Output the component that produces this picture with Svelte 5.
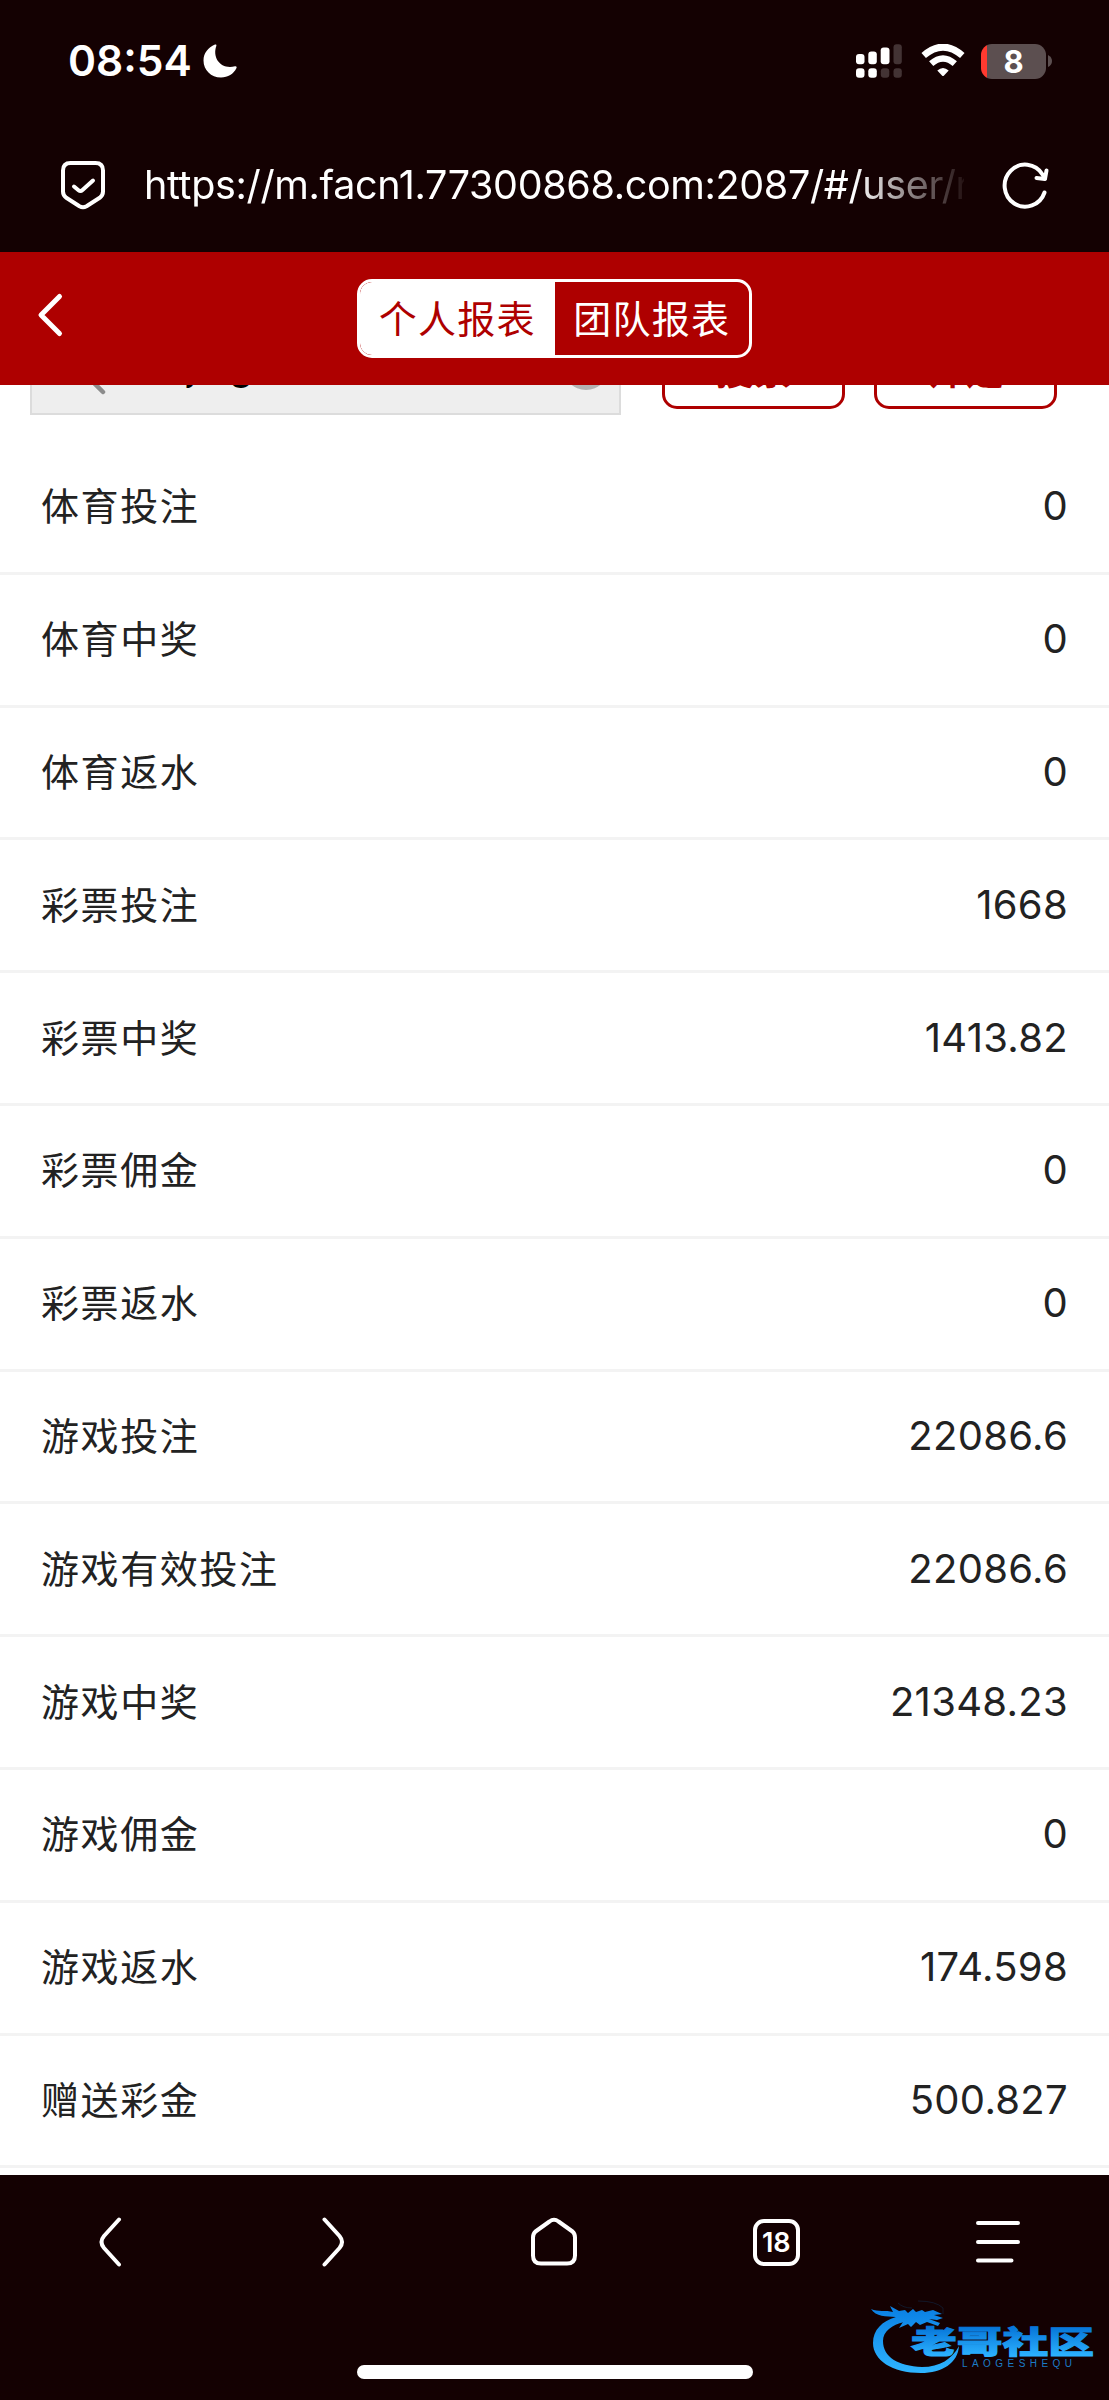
<script>
    const tabs = ['个人报表', '团队报表'];
    let active = 0;
    let account = 'jing';

    const rows = [
        { label: '体育投注', value: '0' },
        { label: '体育中奖', value: '0' },
        { label: '体育返水', value: '0' },
        { label: '彩票投注', value: '1668' },
        { label: '彩票中奖', value: '1413.82' },
        { label: '彩票佣金', value: '0' },
        { label: '彩票返水', value: '0' },
        { label: '游戏投注', value: '22086.6' },
        { label: '游戏有效投注', value: '22086.6' },
        { label: '游戏中奖', value: '21348.23' },
        { label: '游戏佣金', value: '0' },
        { label: '游戏返水', value: '174.598' },
        { label: '赠送彩金', value: '500.827' }
    ];
</script>

<div class="phone">
    <div class="status">
        <span class="time">08:54</span>
        <svg class="moon" width="36" height="36" viewBox="0 0 36 36">
            <path d="M13 1.600C14 1 14.800 1.800 14.300 3C10 15 19 27 33 23.300C34.300 23 35 23.800 34.500 25C31.500 31 26 34.500 19 34.500C9 34.500 1.500 27 1.500 17.500C1.500 10.500 6 4.500 13 1.600Z" fill="#fff" />
        </svg>
        <div class="indicators">
            <svg width="46" height="34" viewBox="0 0 46 34" fill="#fff">
                <rect x="0" y="10" width="8.500" height="10.300" rx="3" />
                <rect x="12.300" y="7.500" width="8.500" height="12.800" rx="3" />
                <rect x="24.700" y="3.500" width="8.800" height="16.800" rx="3" />
                <rect x="37.500" y="0.200" width="8.300" height="20.100" rx="3" opacity="0.2" />
                <rect x="0" y="24.200" width="8.500" height="9.500" rx="3" />
                <rect x="12.300" y="24.200" width="8.500" height="9.500" rx="3" />
                <rect x="24.800" y="24.200" width="8.500" height="9.500" rx="3" opacity="0.2" />
                <rect x="37.500" y="24.200" width="8.300" height="9.500" rx="3" opacity="0.2" />
            </svg>
            <svg class="wifi" width="44" height="34" viewBox="0 0 44 34">
                <path d="M2.700 11.500Q22 -5.300 41.300 11.500" fill="none" stroke="#fff" stroke-width="6.800" />
                <path d="M10.200 19.700Q22 9.300 33.800 19.700" fill="none" stroke="#fff" stroke-width="6.400" />
                <path d="M16.300 26.500Q22 21.500 27.700 26.500L22.800 31.700Q22 32.400 21.200 31.700Z" fill="#fff" />
            </svg>
            <div class="battery"><span>8</span></div>
            <svg class="nub" width="4" height="12" viewBox="0 0 4 12">
                <path d="M0 0Q4 2 4 6T0 12Z" fill="#5c4f50" />
            </svg>
        </div>
    </div>

    <div class="address">
        <svg width="46" height="50" viewBox="0 0 46 50" fill="none" stroke="#fff" stroke-width="4" stroke-linecap="round" stroke-linejoin="round">
            <path d="M10.500 3H35.500Q43 3 43 10.500V31.500Q43 35.500 39.700 37.800L26.500 46.300Q23 48.200 19.500 46.300L6.300 37.800Q3 35.500 3 31.500V10.500Q3 3 10.500 3Z" />
            <path d="M14 26.500L18.500 30.200Q20.500 31.800 22.500 30L33 20.500" />
        </svg>
        <div class="url">https://m.facn1.77300868.com:2087/#/user/r</div>
        <svg width="48" height="48" viewBox="0 0 48 48" fill="none" stroke="#fff" stroke-width="4" stroke-linecap="round" stroke-linejoin="round">
            <path d="M43.500 31.500A20.500 21 0 1 1 41.500 13.500L43.800 17.500" />
            <path d="M45.500 9.500L44 18L35.500 17" />
        </svg>
    </div>

    <header>
        <svg class="back" width="28" height="46" viewBox="0 0 28 46" fill="none" stroke="#fff" stroke-width="5" stroke-linecap="round" stroke-linejoin="round">
            <path d="M23.500 4.500L5 23L23.500 41.500" />
        </svg>
        <div class="tabs">
            {#each tabs as tab, i}
                <button class:active={active === i} on:click={() => (active = i)}>{tab}</button>
            {/each}
        </div>
    </header>

    <main>
        <div class="search">
            <div class="field">
                <svg width="54" height="52" viewBox="0 0 54 52" fill="none" stroke="#8c8c8c" stroke-width="4.500" stroke-linecap="round">
                    <circle cx="23" cy="14" r="15" />
                    <path d="M33 26L51 44" />
                </svg>
                <span class="account">{account}</span>
                <span class="clear"></span>
            </div>
            <button>搜索</button>
            <button>筛选</button>
        </div>

        <ul>
            {#each rows as row}
                <li>
                    <span class="label">{row.label}</span>
                    <span class="value">{row.value}</span>
                </li>
            {/each}
        </ul>
    </main>

    <footer>
        <nav>
            <div>
                <svg width="50" height="50" viewBox="0 0 50 50"><path d="M33 2.500L18 19Q13 25 18 31L33 47.500" /></svg>
            </div>
            <div>
                <svg width="50" height="50" viewBox="0 0 50 50"><path d="M16.500 2.500L31.500 19Q36.500 25 31.500 31L16.500 47.500" /></svg>
            </div>
            <div>
                <svg width="50" height="50" viewBox="0 0 50 50"><path d="M20.500 4.500Q25 1 29.500 4.500L43.500 14.500Q46 16.800 46 20.500V38.500Q46 46.500 38 46.500H12Q4 46.500 4 38.500V20.500Q4 16.800 6.500 14.500Z" /></svg>
            </div>
            <div><span class="count">18</span></div>
            <div>
                <svg width="50" height="50" viewBox="0 0 50 50"><path d="M5 6H45M5 25H45M5 43.500H38.500" /></svg>
            </div>
        </nav>
        <div class="home-bar"></div>
    </footer>

    <svg class="logo" width="230" height="90" viewBox="0 0 230 90">
        <defs>
            <linearGradient id="ring" gradientUnits="userSpaceOnUse" x1="0" y1="8" x2="0" y2="72">
                <stop offset="0" stop-color="#0a80e4" />
                <stop offset="1" stop-color="#2eb4ff" />
            </linearGradient>
            <linearGradient id="word" gradientUnits="userSpaceOnUse" x1="0" y1="27" x2="0" y2="56">
                <stop offset="0" stop-color="#0675d8" />
                <stop offset="1" stop-color="#2cb2ff" />
            </linearGradient>
        </defs>
        <g fill="url(#ring)">
            <path d="M26 17C12 21 3 30 3 43C3 60 22 73 51 73C72 73 88 63 89 46C82 59 70 67 52 67C28 66 13 57 13 41C13 31 22 25 34 22Z" />
            <path d="M1 9C8 12 16 10 23 12L20 6L29 11L35 10L38 13L43 9L46 12L52 10L55 12L63 10L72 14L64 15L73 18L67 20L59 19L70 23L68 26L57 22L50 25L46 22L41 27L38 24L29 28L33 22L24 23L26 17C16 16 6 17 1 9Z" />
        </g>
        <path d="M28 3Q33 8 42 8M48 1Q66 1 73 8V14" fill="none" stroke="#0d4c80" stroke-width="1" opacity="0.3" />
        <text class="word" x="41" y="53" textLength="183" lengthAdjust="spacingAndGlyphs">老哥社区</text>
        <text class="latin" x="92" y="67" textLength="110">LAOGESHEQU</text>
    </svg>
</div>

<style>
    :global(body) {
        margin: 0;
        background: #140102;
    }

    .phone {
        position: relative;
        display: flex;
        flex-direction: column;
        width: 1109px;
        height: 2400px;
        overflow: hidden;
        background: #140102;
        color: #fff;
        font-family: Inter, "Noto Sans CJK SC", sans-serif;
    }

    button {
        padding: 0;
        border: 0;
        background: none;
        font-family: inherit;
        cursor: pointer;
    }

    svg {
        display: block;
        flex: none;
    }

    /* status bar */
    .status {
        display: flex;
        align-items: center;
        flex: none;
        box-sizing: border-box;
        height: 122px;
        padding: 0 57px 0 68px;
    }

    .time {
        width: 134px;
        font-size: 42.500px;
        font-weight: 600;
        line-height: 52px;
        white-space: nowrap;
    }

    .moon {
        margin-top: -1px;
    }

    .indicators {
        display: flex;
        align-items: center;
        margin-left: auto;
    }

    .wifi {
        margin: 0 16px 0 19px;
    }

    .battery {
        width: 65px;
        height: 35px;
        border-radius: 11px;
        background: linear-gradient(90deg, #ff3a30 6px, #5c4f50 6px);
        font-size: 31px;
        font-weight: 700;
        line-height: 35px;
        text-align: center;
    }

    .nub {
        margin-left: 2px;
    }

    /* address bar */
    .address {
        display: flex;
        align-items: center;
        flex: none;
        box-sizing: border-box;
        height: 130px;
        padding: 0 60px 4px;
    }

    .url {
        width: 820px;
        margin: 0 37px 0 38px;
        font-size: 39.500px;
        letter-spacing: -0.350px;
        line-height: 56px;
        white-space: nowrap;
        -webkit-mask-image: linear-gradient(90deg, #000 710px, transparent 828px);
        mask-image: linear-gradient(90deg, #000 710px, transparent 828px);
    }

    /* report header */
    header {
        display: grid;
        grid-template-columns: 1fr auto 1fr;
        align-items: center;
        flex: none;
        height: 133px;
        background: #ae0000;
    }

    .back {
        margin: -8px 0 0 36px;
    }

    .tabs {
        display: flex;
        box-sizing: border-box;
        width: 395px;
        height: 79px;
        border: 3px solid #fff;
        border-radius: 15px;
        overflow: hidden;
    }

    .tabs button {
        flex: 1;
        padding-bottom: 4px;
        color: #fff;
        font-size: 38px;
        letter-spacing: 1.300px;
    }

    .tabs .active {
        background: #fff;
        border-radius: 12px 0 0 12px;
        color: #ae0000;
    }

    /* scrolled list */
    main {
        flex: 1;
        min-height: 0;
        overflow: hidden;
        background: #fff;
        color: #222;
    }

    .search {
        display: flex;
        align-items: center;
        margin: -53px 51px 27px 30px;
    }

    .field {
        display: flex;
        align-items: center;
        box-sizing: border-box;
        width: 591px;
        height: 83px;
        margin-right: 41px;
        padding: 0 10px 0 20px;
        border: 2px solid #dcdcdc;
        background: #eee;
        color: #000;
        font-size: 39px;
    }

    .account {
        margin: -16px 0 0 81px;
        line-height: 48px;
    }

    .clear {
        width: 46px;
        height: 46px;
        margin: -14px 0 0 auto;
        border-radius: 50%;
        background: #b3b3b3;
    }

    .search button {
        box-sizing: border-box;
        width: 183px;
        height: 75px;
        margin-top: -4px;
        padding-bottom: 9px;
        border: 3px solid #ae0000;
        border-radius: 15px;
        color: #ae0000;
        font-size: 38px;
        font-weight: 700;
    }

    .search button + button {
        margin-left: 29px;
    }

    ul {
        margin: 0;
        padding: 0;
        list-style: none;
    }

    li {
        display: flex;
        align-items: center;
        justify-content: space-between;
        box-sizing: border-box;
        height: 132.800px;
        padding: 0 41px;
        border-bottom: 3px solid #f3f3f3;
    }

    .label {
        padding-bottom: 6px;
        font-size: 38px;
        letter-spacing: 1.600px;
    }

    .value {
        padding-bottom: 2px;
        font-size: 40px;
        letter-spacing: 0.300px;
    }

    /* browser toolbar */
    footer {
        display: flex;
        flex-direction: column;
        align-items: center;
        justify-content: space-between;
        flex: none;
        box-sizing: border-box;
        height: 225px;
        padding: 42px 0 21px;
    }

    nav {
        display: grid;
        grid-template-columns: repeat(5, 1fr);
        justify-items: center;
        align-items: center;
        width: 100%;
    }

    nav svg {
        fill: none;
        stroke: #fff;
        stroke-width: 4;
        stroke-linecap: round;
        stroke-linejoin: round;
    }

    .count {
        display: block;
        box-sizing: border-box;
        width: 47px;
        height: 47px;
        border: 4px solid #fff;
        border-radius: 11px;
        font-size: 27px;
        font-weight: 600;
        line-height: 39px;
        text-align: center;
    }

    .home-bar {
        width: 396px;
        height: 14px;
        border-radius: 7px;
        background: #fff;
    }

    .logo {
        position: absolute;
        left: 870px;
        top: 2300px;
    }

    .word {
        fill: url(#word);
        stroke: url(#word);
        stroke-width: 1px;
        font-family: "Noto Sans CJK SC", sans-serif;
        font-size: 31px;
        font-weight: 900;
    }

    .latin {
        fill: #1b7cc6;
        font-family: "Liberation Sans", sans-serif;
        font-size: 10px;
    }
</style>
